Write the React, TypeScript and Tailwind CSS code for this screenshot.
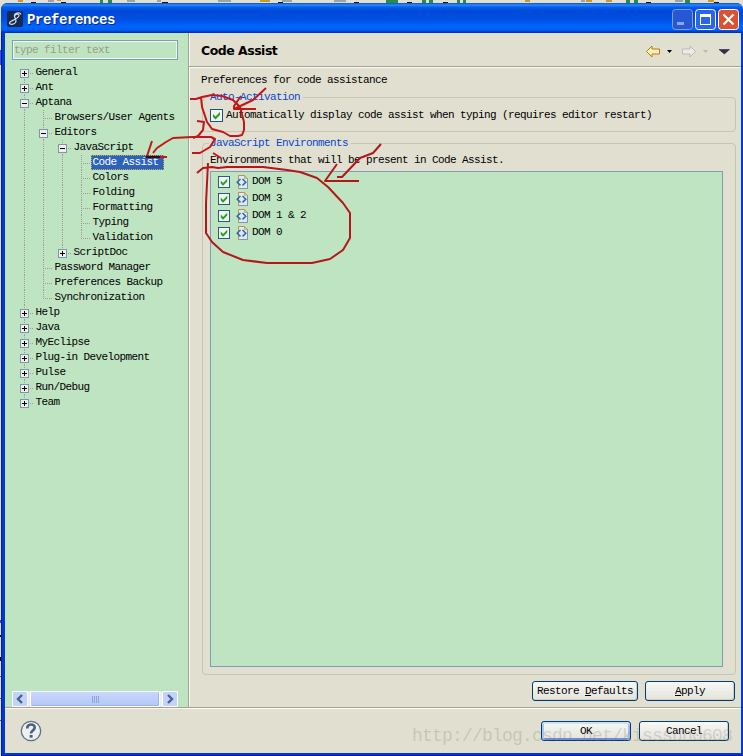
import type { ReactNode } from "react";
import { clsx } from "clsx";

type TreeRow = {
  label: string;
  depth: number;
  open?: boolean;
  // levels whose dotted line continues past this row
  lines: number[];
  selected?: boolean;
};

const rows: TreeRow[] = [
  { label: "General", depth: 0, open: false, lines: [0] },
  { label: "Ant", depth: 0, open: false, lines: [0] },
  { label: "Aptana", depth: 0, open: true, lines: [0] },
  { label: "Browsers/User Agents", depth: 1, lines: [0, 1] },
  { label: "Editors", depth: 1, open: true, lines: [0, 1] },
  { label: "JavaScript", depth: 2, open: true, lines: [0, 1, 2] },
  { label: "Code Assist", depth: 3, lines: [0, 1, 2, 3], selected: true },
  { label: "Colors", depth: 3, lines: [0, 1, 2, 3] },
  { label: "Folding", depth: 3, lines: [0, 1, 2, 3] },
  { label: "Formatting", depth: 3, lines: [0, 1, 2, 3] },
  { label: "Typing", depth: 3, lines: [0, 1, 2, 3] },
  { label: "Validation", depth: 3, lines: [0, 1, 2] },
  { label: "ScriptDoc", depth: 2, open: false, lines: [0, 1] },
  { label: "Password Manager", depth: 1, lines: [0, 1] },
  { label: "Preferences Backup", depth: 1, lines: [0, 1] },
  { label: "Synchronization", depth: 1, lines: [0] },
  { label: "Help", depth: 0, open: false, lines: [0] },
  { label: "Java", depth: 0, open: false, lines: [0] },
  { label: "MyEclipse", depth: 0, open: false, lines: [0] },
  { label: "Plug-in Development", depth: 0, open: false, lines: [0] },
  { label: "Pulse", depth: 0, open: false, lines: [0] },
  { label: "Run/Debug", depth: 0, open: false, lines: [0] },
  { label: "Team", depth: 0, open: false, lines: [] },
];

const environments = ["DOM 5", "DOM 3", "DOM 1 & 2", "DOM 0"];

function TreeGuides({ row, first }: { row: TreeRow; first: boolean }) {
  const x = row.depth * 19 + 4;
  const hasBox = row.open !== undefined;
  return (
    <svg
      width={row.depth * 19 + 14}
      height="15"
      className="shrink-0"
      shapeRendering="crispEdges"
      stroke="#a19f8e"
      strokeDasharray="1 1"
    >
      {row.lines.map((l) => (
        <path key={l} d={`M${l * 19 + 4.5} ${first ? 8 : 0}V15`} />
      ))}
      {!row.lines.includes(row.depth) && <path d={`M${x + 0.5} 0V8`} />}
      <path d={`M${hasBox ? x + 6 : x} 8.5H${x + 9}`} />
      {hasBox && (
        <g strokeDasharray="none">
          <rect x={x - 3.5} y="4.5" width="8" height="8" rx="1" fill="#f1efe8" stroke="#7a96b6" />
          <path d={`M${x - 2} 8.5H${x + 3}`} stroke="#000" />
          {!row.open && <path d={`M${x + 0.5} 6V11`} stroke="#000" />}
        </g>
      )}
    </svg>
  );
}

function Check({ size }: { size: number }) {
  return (
    <svg width={size} height={size} viewBox="0 0 13 13" className="shrink-0">
      <rect x="0.5" y="0.5" width="12" height="12" fill="#f3f3ef" stroke="#1c5180" />
      <path d="M3 5v3l2.500 2.500L10 6V3L5.500 7.500z" fill="#21a121" />
    </svg>
  );
}

function FileIcon() {
  return (
    <svg width="13" height="14" viewBox="0 0 13 14" className="shrink-0">
      <path d="M2.500.5h6l3 3v10h-9z" fill="#dfe9f5" stroke="#b19558" />
      <path d="M11.500 4v9.500h-9" fill="none" stroke="#8494b0" />
      <path d="M8.500.5v3h3z" fill="#f2c879" stroke="#b19558" strokeWidth=".6" />
      <path d="M4.500 4 1.200 7.200l3.300 3.200M6.500 4l3.300 3.200-3.300 3.200" fill="none" stroke="#2f6aa8" strokeWidth="1.500" />
    </svg>
  );
}

function GroupBox({ title, className, children }: { title: string; className: string; children: ReactNode }) {
  return (
    <fieldset className={clsx("w-[534px] rounded-[4px] border border-[#c6c5b2]", className)}>
      <legend className="ml-[6px] h-[13px] pr-[3px] pl-px leading-[13px] text-[#0b45cc]">{title}</legend>
      {children}
    </fieldset>
  );
}

function PushButton({ className, focus, children }: { className: string; focus?: boolean; children: ReactNode }) {
  return (
    <button
      className={clsx(
        "h-5 rounded-[3px] border border-[#003c74] bg-gradient-to-b from-[#f8f8f5] to-[#e3e3db] text-center leading-[18px]",
        focus
          ? "shadow-[inset_0_2px_0_#cee0fa,inset_2px_0_0_#a9c5f3,inset_-2px_0_0_#a0bdf0,inset_0_-2px_0_#6f8fdd]"
          : "shadow-[inset_-1px_-1px_0_#d0cfc4]",
        className
      )}
    >
      {children}
    </button>
  );
}

function TitleBar() {
  return (
    <div className="flex h-[30px] shrink-0 items-center rounded-t-[6px] bg-[linear-gradient(#0a4bd0_0,#2b8cff_2px,#0560ea_4px,#0048d8_8px,#0050e4_17px,#0064fb_23px,#0060f4_27px,#0038c4_29px,#0030b8_30px)] pt-[2px] pr-[4px] pl-[6px] text-white">
      <svg width="16" height="16" className="shrink-0">
        <rect width="16" height="16" rx="2" fill="#152a50" />
        <path d="M14 3.500C13 1 6.500 1.500 7.500 5.500c.7 2.500 2.500 3.500 1 6-1.500 2.300-6 2.500-6 .5 0-2.500 9-3.500 9.500-7.500.2-2-4-2-4.500 1" fill="none" stroke="#d5dde9" strokeWidth="1.200" />
      </svg>
      <span className="ml-[4px] flex-1 pt-px text-[14px] leading-4 font-bold tracking-[-0.4px] [text-shadow:1px_1px_#0a2a80]">
        Preferences
      </span>
      <div className="mt-px flex gap-[2px]">
        <svg width="21" height="21">
          <rect x=".5" y=".5" width="20" height="20" rx="3" fill="#2757d2" stroke="#7f9fe8" />
          <path d="M5 13h7v3H5z" fill="#8ca6ea" />
        </svg>
        <svg width="21" height="21">
          <rect x=".5" y=".5" width="20" height="20" rx="3" fill="#2a66ec" stroke="#fff" />
          <path d="M5 5h11v11H5z M6 8v7h9V8z" fill="#fff" fillRule="evenodd" />
        </svg>
        <svg width="21" height="21">
          <rect x=".5" y=".5" width="20" height="20" rx="3" fill="#dc5230" stroke="#fff" />
          <path d="M5.500 5.500l10 10m0-10l-10 10" stroke="#fff" strokeWidth="2.200" />
        </svg>
      </div>
    </div>
  );
}

function ScrollBar() {
  const arrow = "flex h-4 w-4 items-center justify-center rounded-[2px] border border-white bg-[#c2d3fb]";
  return (
    <div className="flex h-4 w-[166px] justify-between bg-[#eeede5]">
      <div className={arrow}>
        <svg width="8" height="10"><path d="M6 1 2 5l4 4" fill="none" stroke="#4d6185" strokeWidth="2.400" /></svg>
      </div>
      <div className="flex h-4 w-[130px] items-center justify-center gap-px rounded-[2px] border border-white bg-gradient-to-b from-[#c8d6fb] to-[#b4c8f6] shadow-[inset_-1px_-1px_0_#9cb4e6]">
        {[0, 1, 2, 3].map((i) => (
          <span key={i} className="h-[7px] w-px bg-[#8ca5dc]" />
        ))}
      </div>
      <div className={arrow}>
        <svg width="8" height="10"><path d="m2 1 4 4-4 4" fill="none" stroke="#4d6185" strokeWidth="2.400" /></svg>
      </div>
    </div>
  );
}

function Sidebar() {
  return (
    <aside className="flex w-[183px] shrink-0 flex-col bg-[#bfe4c2] pt-[7px] pl-[7px]">
      <input
        readOnly
        placeholder="type filter text"
        className="h-5 w-[166px] border border-[#7f9db9] pl-px shadow-[inset_0_0_0_1px_#eef6ee] placeholder:text-[#9d9b89] outline-none"
      />
      <ul className="mt-[5px] ml-2 flex-1">
        {rows.map((row, i) => (
          <li key={row.label} className="flex h-[15px]">
            <TreeGuides row={row} first={i === 0} />
            <span
              className={clsx(
                "h-[15px] pr-[5px] pl-[1.5px] leading-[15px] whitespace-pre",
                row.selected && "bg-[#2a62bd] text-white outline-1 -outline-offset-1 outline-dotted outline-[#e0a040]"
              )}
            >
              {row.label}
            </span>
          </li>
        ))}
      </ul>
      <ScrollBar />
    </aside>
  );
}

function Header() {
  return (
    <header className="flex h-[34px] shrink-0 items-center border-b border-[#a3a193] pt-[3px] pr-[10px] pl-3 shadow-[0_1px_0_#fbfaf5]">
      <h1 className="flex-1 font-['DejaVu_Sans'] text-[12.5px] font-bold tracking-[-0.5px]">Code Assist</h1>
      <svg width="86" height="15">
        <path d="M1.500 7.500 7 2v3h7.500v5H7v3z" fill="#fff0b4" stroke="#b87a18" strokeLinejoin="round" />
        <path d="M22 6h5l-2.500 3z" fill="#000" />
        <path d="M50.500 7.500 45 2v3h-7.500v5H45v3z" fill="#ebebe8" stroke="#b9b9b5" strokeLinejoin="round" />
        <path d="M58 6h5l-2.500 3z" fill="#b9b9b5" />
        <path d="M74 5.500h10.500L79.300 10z" fill="#302c58" stroke="#15132b" strokeWidth=".5" />
      </svg>
    </header>
  );
}

// Hand-drawn red pen strokes over the window
function PenMarks() {
  return (
    <svg className="pointer-events-none absolute inset-0" width="743" height="756" fill="none" stroke="#c3161b" strokeWidth="2" strokeLinejoin="round">
      <path d="M190 99h6l6-2 10-2 10 1 11 4 7 7 4 15v8l-2 5-4 1-8 0-7-4-11-3-5-7-5-15-1-10" />
      <path d="M266 88l-13 12-19 9M241 96l-7 10v3h22" />
      <path d="M197 121l7 1-1 8-5 6-5 2" />
      <path d="M153 153l4-5 9-6 7-4 19-1h19l4 2-5 8-5 3-5 3h-8M152 141l-5 15M213 153l8 5" />
      <path d="M146 157h14" stroke="#360b18" strokeWidth="2.200" />
      <path d="M160 157h7" />
      <path
        d="M197 173l6-5 9-1 6 1 9-1h36l24 3 13 2 17 6 11 9 15 16 7 10v25l-7 12-13 9-18 4h-45l-24-3-20-8-11-10-6-9v-30l2-40"
        stroke="#b4161a"
      />
      <path d="M381 144l-8 9-13 5-18 19h-5M337 164l-12 17h34" stroke="#b4161a" />
    </svg>
  );
}

// Slivers of the window behind, visible along the top and left edge
function Backdrop() {
  return (
    <svg className="absolute top-0 left-0" width="743" height="756" shapeRendering="crispEdges">
      <path d="M31 2.500h5M61 2.500h5M162 2.500h6M278 2.500h5M354 2.500h5M407 2.500h5M443 2.500h5M646 2.500h5M714 2.500h5" stroke="#111" strokeWidth="1" />
      <path d="M18 1h5M57 0h4M260 1h10M525 1h5M586 1h6M606 1h6M708 1h6" stroke="#c89b27" strokeWidth="2" />
      <path d="M100 1h3M108 1h4M386 1h12M422 1h4M429 1h4M457 1h3M463 1h3M626 1h4M634 1h4M685 1h5" stroke="#2b8b42" strokeWidth="3" />
      <path d="M48 1h6M127 1h8M157 1h4M218 1h13M282 1h10M334 1h12M581 1h4M675 1h8" stroke="#9aa3b0" strokeWidth="2" />
      <path d="M.5 635v2M.5 657v4" stroke="#111" />
      <path d="M.5 676v1" stroke="#e22" />
      <path d="M.5 50v15M.5 620v3M.5 698v1M.5 720v1" stroke="#3552cf" />
    </svg>
  );
}

export default function App() {
  return (
    <div className="relative h-[756px] w-[743px] overflow-hidden bg-[#e1dfd0] pt-[3px] pl-px font-['Liberation_Mono',monospace] text-[11px] tracking-[-0.6px] text-black">
      <Backdrop />
      <div className="relative flex h-[753px] w-[742px] flex-col rounded-t-[7px] bg-[#0038d6] shadow-[inset_1px_-1px_0_#001ca8]">
        <TitleBar />
        <div className="mr-[2px] mb-[3px] ml-[4px] flex min-h-0 flex-1 flex-col bg-[#e1dfd0]">
          <div className="flex h-[675px] border-b border-[#a3a193]">
            <Sidebar />
            <main className="flex flex-1 flex-col border-l border-[#a3a193] shadow-[inset_1px_0_0_#fbfaf5]">
              <Header />
              <div className="flex flex-1 flex-col pl-[13px]">
                <p className="mt-[6px] -ml-px h-[15px] leading-[15px]">Preferences for code assistance</p>
                <GroupBox title="Auto-Activation" className="mt-[3px] h-[41px]">
                  <label className="mt-[3px] ml-[7px] flex items-center gap-[3px]">
                    <Check size={13} />
                    Automatically display code assist when typing (requires editor restart)
                  </label>
                </GroupBox>
                <GroupBox title="JavaScript Environments" className="mt-[5px] h-[538px]">
                  <p className="mt-[3px] ml-[7px] h-[15px] leading-[15px]">Environments that will be present in Code Assist.</p>
                  <ul className="mt-[3px] ml-[7px] h-[496px] w-[513px] border border-[#7f9db9] bg-[#bfe4c2] pt-px pl-[7px]">
                    {environments.map((env) => (
                      <li key={env} className="flex h-[17px] items-center">
                        <Check size={12} />
                        <span className="mr-[3px] ml-[6px]"><FileIcon /></span>
                        {env}
                      </li>
                    ))}
                  </ul>
                </GroupBox>
                <div className="mt-[6px] flex gap-[7px] pl-[330px]">
                  <PushButton className="w-[106px]">Restore <u>D</u>efaults</PushButton>
                  <PushButton className="w-[90px]"><u>A</u>pply</PushButton>
                </div>
              </div>
            </main>
          </div>
          <footer className="flex flex-1 items-center justify-between border-t border-[#fbfaf5] pr-3 pl-[15px]">
            <svg width="22" height="22">
              <circle cx="11" cy="11" r="9.700" fill="#eef0f0" stroke="#5c6f8c" strokeWidth="1.300" />
              <path d="M7.200 8.500C7.200 3.300 15 3.500 14.700 7.700c-.2 2.800-3.700 2.800-3.700 5.800" fill="none" stroke="#4b607f" strokeWidth="2.600" />
              <path d="M9.600 15h3v2.700h-3z" fill="#4b607f" />
            </svg>
            <div className="flex gap-2">
              <PushButton className="w-[90px]" focus>OK</PushButton>
              <PushButton className="w-[90px]">Cancel</PushButton>
            </div>
          </footer>
        </div>
      </div>
      <PenMarks />
      <span className="pointer-events-none absolute top-[724px] left-[412px] text-[18px] leading-6 tracking-[-0.8px] text-[#77776b]/25">
        http://blog.csdn.net/kisssun0608
      </span>
    </div>
  );
}
